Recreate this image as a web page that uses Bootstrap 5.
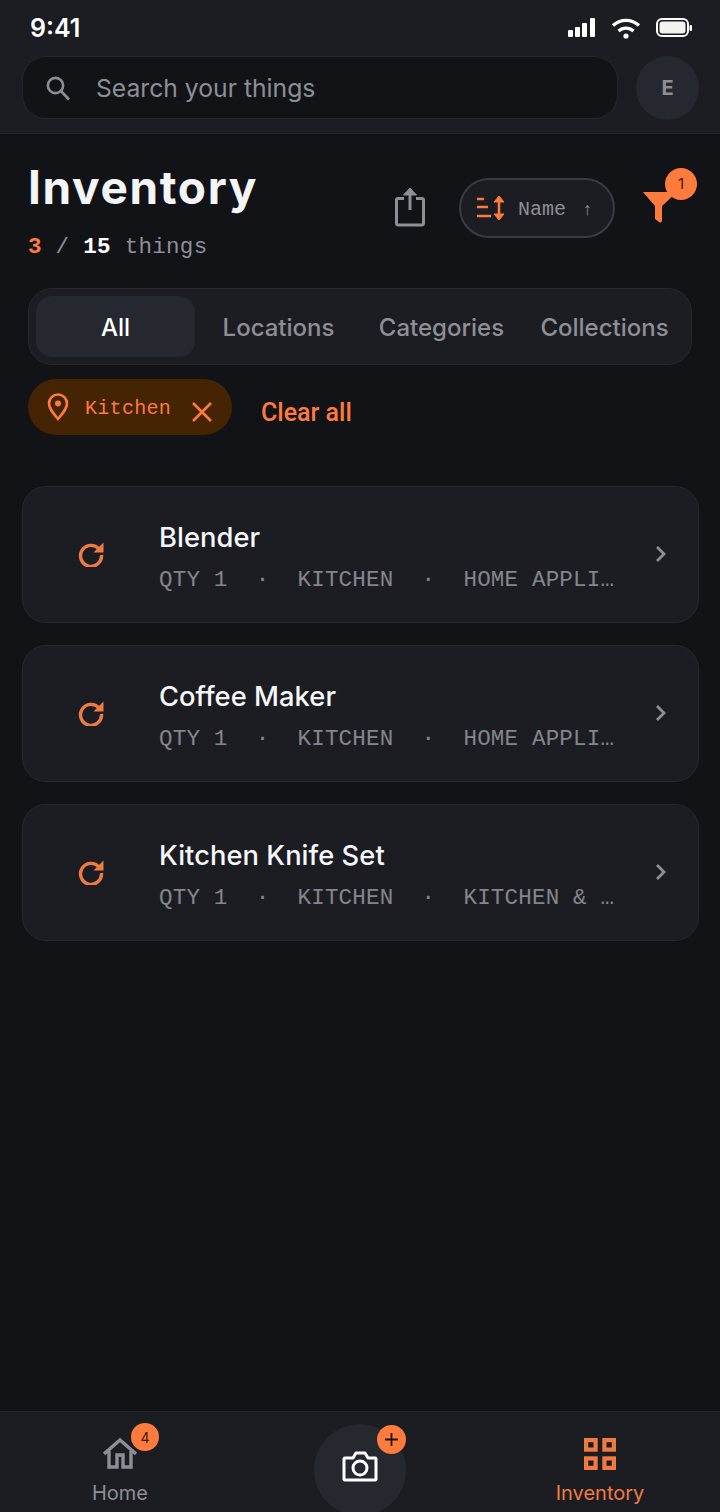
<!DOCTYPE html>
<html lang="en">
<head>
<meta charset="UTF-8">
<meta name="viewport" content="width=device-width, initial-scale=1.0">
<title>Inventory</title>
<link href="https://cdn.jsdelivr.net/npm/bootstrap@5.3.0/dist/css/bootstrap.min.css" rel="stylesheet">
<style>
    body { background: #121317; font-family: Inter, sans-serif; color: #f4f5f7; }
    .screen { width: 720px; height: 1512px; overflow: hidden; }
    .top-head { height: 134px; background: #1c1d23; border-bottom: 1px solid #25262c; padding: 0 21px 0 22px; }
    .status-row { height: 52px; margin-bottom: 4px; padding: 0 7px 0 8px; }
    .clock { font-size: 25px; font-weight: 600; line-height: 1; margin-top: 4px; color: #fff; }
    .search-box { height: 63px; background: #121317; border: 1px solid #25262c; border-radius: 24px; padding-left: 22px; }
    .search-box span { font-size: 24.7px; line-height: 32px; color: #8e8f96; margin-left: 25px; }
    .avatar-dot { width: 63px; height: 64px; background: #25282f; color: #8e8f96; font-weight: 700; font-size: 20px; margin-left: 18px; }
    .main-area { padding: 0 28px; }
    .title-row { height: 154px; padding-top: 24px; }
    .big-title { font-size: 46px; font-weight: 700; line-height: 58px; margin: 0; letter-spacing: 1.65px; }
    .count-line { font-family: "Liberation Mono", monospace; font-size: 22.5px; line-height: 28px; margin-top: 17px; color: #8e8f96; letter-spacing: .3px; }
    .count-line b { color: #ff7a3d; }
    .count-line strong { color: #fff; }
    .share-wrap { margin: 29px 34px 0 0; }
    .sort-pill { width: 156px; height: 60px; margin-top: 20px; background: #1c1d23; border: 2px solid #3b3c42; padding-left: 15px; font-family: "Liberation Mono", monospace; font-size: 20px; color: #8e8f96; }
    .sort-pill span { padding-top: 4px; }
    .filter-wrap { width: 68px; margin: 8px -5px 0 14px; }
    .funnel-icon { margin: 20px 0 0 14px; }
    .filter-count { left: 36px; top: 2px; width: 32px; height: 32px; background: #ff7a3d; color: #3a1c0a; font-size: 15px; }
    .tab-bar { height: 77px; background: #1c1d23; border: 1px solid #27282e; border-radius: 24px; padding: 7px; gap: 4px; }
    .tab-item { flex: 1 1 0; font-size: 24px; font-weight: 500; color: #8e8f96; border-radius: 16px; padding-top: 2px; }
    .tab-item.active-tab { background: #25282f; color: #fff; }
    .chip-row { height: 56px; margin-top: 14px; }
    .place-chip { width: 204px; height: 56px; background: #452404; padding-left: 18px; color: #ff7a3d; font-family: "Liberation Mono", monospace; font-size: 20px; letter-spacing: .3px; }
    .chip-text { margin-left: 15px; padding-top: 4px; }
    .chip-x { margin-left: 21px; margin-top: 10px; }
    .clear-link { font-size: 25px; font-weight: 500; color: #ff7a3d; margin-left: 29px; margin-top: 15px; font-family: Roboto, sans-serif; }
    .thing-list { padding: 51px 21px 0 22px; gap: 22px; }
    .thing-card { height: 137px; background: #1c1d23; border: 1px solid #27282e; border-radius: 24px; }
    .thing-icon { width: 136px; padding-bottom: 2px; }
    .thing-text { padding-top: 4px; }
    .thing-name { font-size: 27.3px; font-weight: 500; line-height: 36px; color: #f6f7f9; letter-spacing: .05px; }
    .thing-meta { width: 457px; margin-top: 10px; font-family: "Liberation Mono", monospace; font-size: 22.5px; line-height: 28px; color: #85868d; letter-spacing: .2px; white-space: nowrap; }
    .thing-meta i { font-style: normal; width: 70px; text-align: center; flex: none; }
    .thing-meta .last-bit { overflow: hidden; text-overflow: ellipsis; }
    .chev-icon { margin: 0 30px 2px 0; }
    .bottom-bar { height: 101px; background: #1c1d23; border-top: 1px solid #25262c; }
    .bar-slot { width: 240px; height: 100px; }
    .bar-label { font-size: 20px; line-height: 24px; color: #8e8f96; position: absolute; left: 0; right: 0; top: 69px; text-align: center; }
    .bar-label.is-on { color: #f07b42; }
    .home-count { left: 131px; top: 11px; width: 28px; height: 28px; background: #ff7a3d; color: #3a1c0a; font-size: 14px; }
    .home-icon { left: 103px; top: 26px; }
    .grid-icon { left: 104px; top: 26px; }
    .cam-disc { left: 74px; top: 12px; width: 92px; height: 92px; background: #25282f; padding-bottom: 8px; }
    .plus-dot { left: 137px; top: 13px; width: 29px; height: 29px; background: #ff7a3d; }
</style>
</head>
<body>
<div class="screen d-flex flex-column">
    <header class="top-head">
        <div class="status-row d-flex justify-content-between align-items-center">
            <div class="clock">9:41</div>
            <svg width="126" height="24" viewBox="0 0 126 24" class="mt-1">
                <g fill="#fff">
                    <rect x="2" y="14" width="5" height="7" rx="1"/><rect x="9" y="11" width="5" height="10" rx="1"/><rect x="16" y="7" width="5" height="14" rx="1"/><rect x="24" y="2" width="5" height="19" rx="1"/>
                    <circle cx="60" cy="20" r="2.6"/>
                </g>
                <g fill="none" stroke="#fff" stroke-width="3.2">
                    <path d="M47 9.5a19 19 0 0 1 26 0"/><path d="M52.5 15a11 11 0 0 1 15 0"/>
                </g>
                <rect x="91" y="3" width="31" height="17" rx="5" fill="none" stroke="#fff" stroke-width="2"/>
                <rect x="93.5" y="5.5" width="26" height="12" rx="3" fill="#f3f3ef"/>
                <rect x="123.5" y="9" width="2.5" height="6" rx="1" fill="#fff"/>
            </svg>
        </div>
        <div class="d-flex">
            <div class="search-box flex-grow-1 d-flex align-items-center">
                <svg width="26" height="26" viewBox="0 0 26 26" fill="none" stroke="#8e8f96" stroke-width="2.6"><circle cx="10.5" cy="10.5" r="7.6"/><path d="M16 16l8 8.5"/></svg>
                <span>Search your things</span>
            </div>
            <div class="avatar-dot rounded-circle d-flex align-items-center justify-content-center">E</div>
        </div>
    </header>

    <main class="main-area">
        <div class="title-row d-flex">
            <div class="flex-grow-1">
                <h1 class="big-title">Inventory</h1>
                <div class="count-line"><b>3</b> / <strong>15</strong> things</div>
            </div>
            <div class="share-wrap">
                <svg width="30" height="40" viewBox="0 0 30 40" fill="none" stroke="#8e8f96" stroke-width="3" stroke-linejoin="round"><path d="M9 11.500H3a1.500 1.500 0 0 0-1.500 1.500v23a2 2 0 0 0 2 2h23a2 2 0 0 0 2-2V13a1.500 1.500 0 0 0-1.500-1.500h-6"/><path d="M15 23V6"/><path d="M8.500 8l6.500-7 6.500 7z" fill="#8e8f96" stroke-width="1"/></svg>
            </div>
            <div class="sort-pill rounded-pill d-flex align-items-center">
                <svg width="30" height="26" viewBox="0 0 30 26" fill="none" stroke="#ff7a3d" stroke-width="2.6"><path d="M1 4h7M1 12h11M1 21h14"/><path d="M23 3v20"/><path d="M18 7l5-6 5 6zM18 19l5 6 5-6z" fill="#ff7a3d" stroke-width="1"/></svg>
                <span class="ms-2 ps-1">Name</span>
                <span class="ms-3 small">↑</span>
            </div>
            <div class="filter-wrap position-relative">
                <svg width="34" height="38" viewBox="0 0 34 38" class="funnel-icon" fill="#ff7a3d"><path d="M0 6h34L19 20v15a2 2 0 0 1-3 1l-4-3V20z"/></svg>
                <span class="filter-count position-absolute rounded-circle d-flex align-items-center justify-content-center">1</span>
            </div>
        </div>

        <div class="tab-bar d-flex">
            <div class="tab-item active-tab d-flex align-items-center justify-content-center">All</div>
            <div class="tab-item d-flex align-items-center justify-content-center">Locations</div>
            <div class="tab-item d-flex align-items-center justify-content-center">Categories</div>
            <div class="tab-item d-flex align-items-center justify-content-center">Collections</div>
        </div>

        <div class="chip-row d-flex">
            <div class="place-chip rounded-pill d-flex align-items-center">
                <svg width="24" height="28" viewBox="0 0 24 28" fill="none" stroke="#ff7a3d" stroke-width="2.6"><path d="M12 26C6 19 3 15 3 10.500a9 9 0 0 1 18 0C21 15 18 19 12 26z"/><circle cx="12" cy="10.500" r="3" fill="#ff7a3d" stroke="none"/></svg>
                <span class="chip-text">Kitchen</span>
                <svg width="20" height="20" viewBox="0 0 20 20" class="chip-x" stroke="#ff7a3d" stroke-width="2.600"><path d="M1 1l18 18M19 1L1 19"/></svg>
            </div>
            <div class="clear-link">Clear all</div>
        </div>
    </main>

    <section class="thing-list d-flex flex-column flex-grow-1">
        <div class="thing-card d-flex align-items-center">
            <div class="thing-icon d-flex justify-content-center">
                <svg width="26" height="26" viewBox="0 0 26 26" fill="none" stroke="#f07b42" stroke-width="3.4"><path d="M21 8A10.500 10.500 0 1 0 23.500 14"/><path d="M25.500 1.500v10h-10z" fill="#f07b42" stroke="none"/></svg>
            </div>
            <div class="thing-text flex-grow-1">
                <div class="thing-name">Blender</div>
                <div class="thing-meta d-flex"><span>QTY 1</span><i>·</i><span>KITCHEN</span><i>·</i><span class="last-bit">HOME APPLIANCES</span></div>
            </div>
            <svg width="14" height="20" viewBox="0 0 14 20" class="chev-icon" fill="none" stroke="#8e8f96" stroke-width="2.8"><path d="M3 3l7 7-7 7"/></svg>
        </div>
        <div class="thing-card d-flex align-items-center">
            <div class="thing-icon d-flex justify-content-center">
                <svg width="26" height="26" viewBox="0 0 26 26" fill="none" stroke="#f07b42" stroke-width="3.4"><path d="M21 8A10.500 10.500 0 1 0 23.500 14"/><path d="M25.500 1.500v10h-10z" fill="#f07b42" stroke="none"/></svg>
            </div>
            <div class="thing-text flex-grow-1">
                <div class="thing-name">Coffee Maker</div>
                <div class="thing-meta d-flex"><span>QTY 1</span><i>·</i><span>KITCHEN</span><i>·</i><span class="last-bit">HOME APPLIANCES</span></div>
            </div>
            <svg width="14" height="20" viewBox="0 0 14 20" class="chev-icon" fill="none" stroke="#8e8f96" stroke-width="2.8"><path d="M3 3l7 7-7 7"/></svg>
        </div>
        <div class="thing-card d-flex align-items-center">
            <div class="thing-icon d-flex justify-content-center">
                <svg width="26" height="26" viewBox="0 0 26 26" fill="none" stroke="#f07b42" stroke-width="3.4"><path d="M21 8A10.500 10.500 0 1 0 23.500 14"/><path d="M25.500 1.500v10h-10z" fill="#f07b42" stroke="none"/></svg>
            </div>
            <div class="thing-text flex-grow-1">
                <div class="thing-name">Kitchen Knife Set</div>
                <div class="thing-meta d-flex"><span>QTY 1</span><i>·</i><span>KITCHEN</span><i>·</i><span class="last-bit">KITCHEN &amp; DINING</span></div>
            </div>
            <svg width="14" height="20" viewBox="0 0 14 20" class="chev-icon" fill="none" stroke="#8e8f96" stroke-width="2.8"><path d="M3 3l7 7-7 7"/></svg>
        </div>
    </section>

    <nav class="bottom-bar d-flex">
        <div class="bar-slot position-relative">
            <svg width="34" height="31" viewBox="0 0 34 31" class="home-icon position-absolute" fill="none" stroke="#8e8f96" stroke-width="3.4"><path d="M1 16L17 2l16 14"/><path d="M6 13v16h8V17h6v12h8V13"/></svg>
            <span class="home-count position-absolute rounded-circle d-flex align-items-center justify-content-center">4</span>
            <div class="bar-label">Home</div>
        </div>
        <div class="bar-slot position-relative">
            <div class="cam-disc position-absolute rounded-circle d-flex align-items-center justify-content-center">
                <svg width="36" height="32" viewBox="0 0 36 32" fill="none" stroke="#fff" stroke-width="3" stroke-linejoin="round"><path d="M3 8h8l3-5h9l3 5h7a1 1 0 0 1 1 1v20a1 1 0 0 1-1 1H3a1 1 0 0 1-1-1V9a1 1 0 0 1 1-1z"/><circle cx="18" cy="18" r="7"/></svg>
            </div>
            <span class="plus-dot position-absolute rounded-circle d-flex align-items-center justify-content-center">
                <svg width="15" height="15" viewBox="0 0 15 15" stroke="#221208" stroke-width="1.8"><path d="M7.500 1v13M1 7.500h13"/></svg>
            </span>
        </div>
        <div class="bar-slot position-relative">
            <svg width="32" height="32" viewBox="0 0 32 32" class="grid-icon position-absolute" fill="none" stroke="#f07b42" stroke-width="4.2"><rect x="2.100" y="2.100" width="9.500" height="9.500"/><rect x="20.400" y="2.100" width="9.500" height="9.500"/><rect x="2.100" y="20.400" width="9.500" height="9.500"/><rect x="20.400" y="20.400" width="9.500" height="9.500"/></svg>
            <div class="bar-label is-on">Inventory</div>
        </div>
    </nav>
</div>
<script src="https://cdn.jsdelivr.net/npm/bootstrap@5.3.0/dist/js/bootstrap.bundle.min.js"></script>
</body>
</html>
